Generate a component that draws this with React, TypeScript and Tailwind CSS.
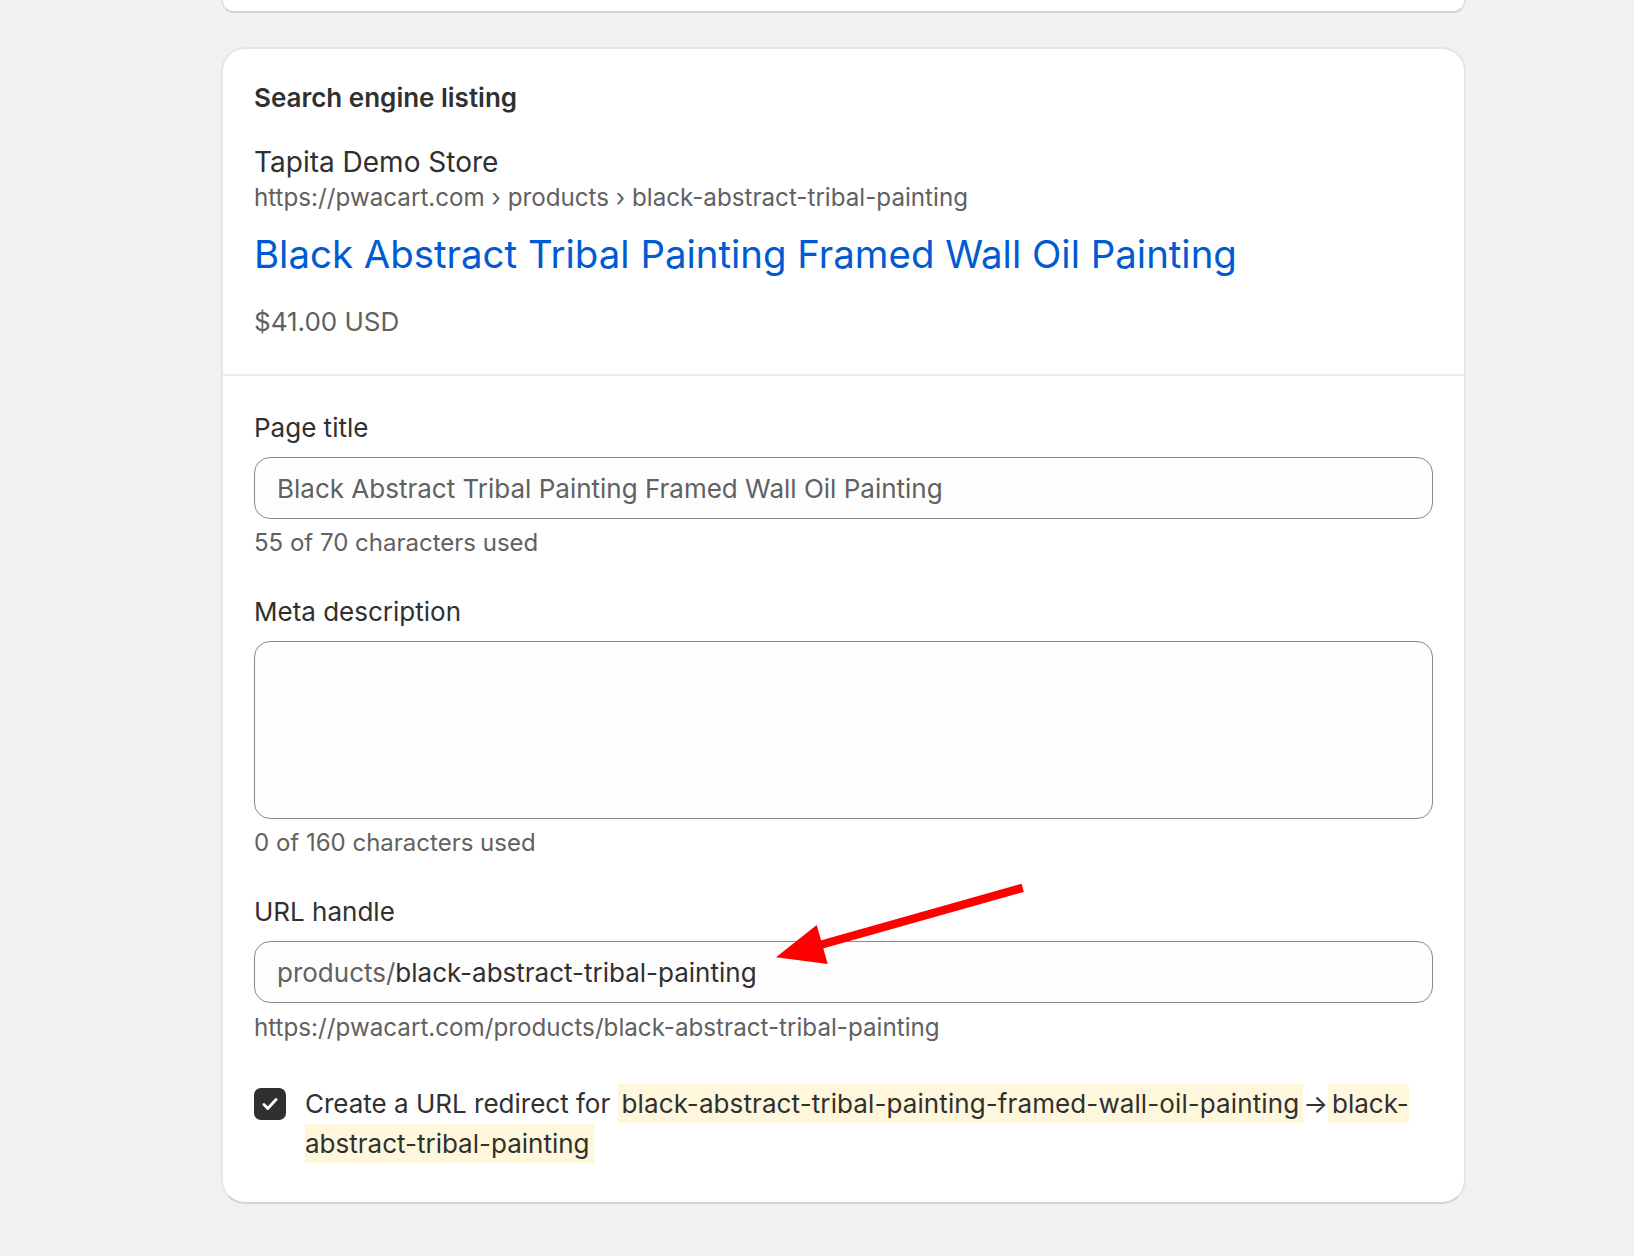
export default function App() {
  return (
    <div className="relative min-h-screen bg-[#f1f1f1] font-['Inter',sans-serif] text-[#303030] antialiased">
      <div className="ml-[221px] w-[1245px]">
        {/* bottom edge of the card above */}
        <div className="h-[13px] rounded-b-[24px] border-2 border-t-0 border-[#e3e3e3] border-b-[#d4d4d4] bg-white" />

        {/* Search engine listing card */}
        <div className="mt-[34px] rounded-[24px] border-2 border-[#e6e6e6] border-b-[#d4d4d4] bg-white">
          <div className="px-[31px] pt-[31px] pb-[34px]">
            <h2 className="text-[26px] leading-[36px] font-semibold">Search engine listing</h2>
            <p className="mt-[28px] text-[28px] leading-[36px]">Tapita Demo Store</p>
            <p className="mt-[2px] text-[24.2px] leading-[32px] text-[#616161]">
              https://pwacart.com › products › black-abstract-tribal-painting
            </p>
            <p className="mt-[16px] text-[38.4px] leading-[48px] text-[#005bd3]">
              Black Abstract Tribal Painting Framed Wall Oil Painting
            </p>
            <p className="mt-[26px] text-[26px] leading-[36px] text-[#616161]">$41.00 USD</p>
          </div>

          <div className="h-[2px] bg-[#ebebeb]" />

          <div className="px-[31px] pt-[34px] pb-[38px]">
            <label className="block text-[26px] leading-[36px]">Page title</label>
            <div className="mt-[11px] flex h-[62px] items-center rounded-[16px] border border-[#8a8a8a] bg-[#fdfdfd] px-[22px] text-[26px] text-[#616161]">
              Black Abstract Tribal Painting Framed Wall Oil Painting
            </div>
            <p className="mt-[8px] text-[24px] leading-[32px] text-[#616161]">55 of 70 characters used</p>

            <label className="mt-[35px] block text-[26px] leading-[36px]">Meta description</label>
            <div className="mt-[11px] h-[178px] rounded-[16px] border border-[#8a8a8a] bg-[#fdfdfd]" />
            <p className="mt-[8px] text-[24px] leading-[32px] text-[#616161]">0 of 160 characters used</p>

            <label className="mt-[35px] block text-[26px] leading-[36px]">URL handle</label>
            <div className="mt-[11px] flex h-[62px] items-center rounded-[16px] border border-[#8a8a8a] bg-[#fdfdfd] px-[22px] text-[26px]">
              <span className="text-[#616161]">products/</span>
              <span className="text-[#303030]">black-abstract-tribal-painting</span>
            </div>
            <p className="mt-[9px] text-[24.2px] leading-[32px] text-[#616161]">
              https://pwacart.com/products/black-abstract-tribal-painting
            </p>

            <div className="mt-[40px] flex gap-[19px]">
              <div className="mt-[4px] flex h-[32px] w-[32px] shrink-0 items-center justify-center rounded-[7px] bg-[#303030]">
                <svg width="22" height="22" viewBox="0 0 20 20" fill="none">
                  <path d="M4.5 10.5l3.5 3.5 7.5-8" stroke="white" strokeWidth="2.6" strokeLinecap="round" strokeLinejoin="round" />
                </svg>
              </div>
              <p className="text-[26px] leading-[40px]">
                Create a URL redirect for{' '}
                <span className="bg-[#fff7db] px-[4px] py-[4px] tracking-[0.1px]">black-abstract-tribal-painting-framed-wall-oil-painting</span>
                →
                <span className="bg-[#fff7db] px-[4px] py-[4px]">black-abstract-tribal-painting</span>
              </p>
            </div>
          </div>
        </div>
      </div>

      {/* annotation arrow */}
      <svg className="pointer-events-none absolute left-[770px] top-[880px]" width="260" height="90" viewBox="0 0 260 90">
        <line x1="252.7" y1="7.8" x2="50" y2="65" stroke="#ff0000" strokeWidth="8.5" />
        <polygon points="6,77.3 46.7,45 57.7,84" fill="#ff0000" />
      </svg>
    </div>
  );
}
